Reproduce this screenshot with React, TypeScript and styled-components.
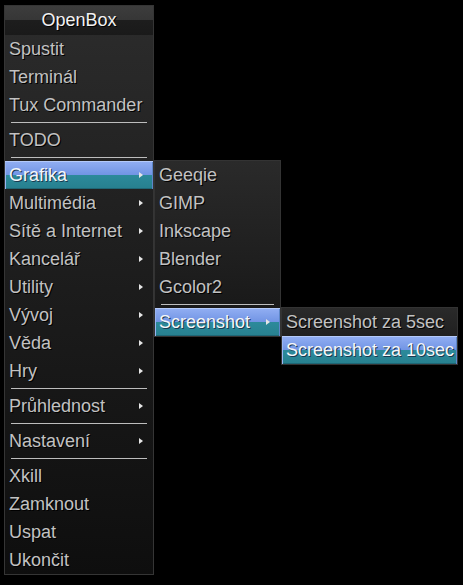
import styled, { createGlobalStyle } from 'styled-components'

const GlobalStyle = createGlobalStyle`
  html, body {
    margin: 0;
    padding: 0;
    background: #000;
  }
  body {
    font-family: "Liberation Sans", Arial, sans-serif;
  }
`

type Entry =
  | { kind: 'item'; label: string; sub?: boolean; active?: boolean }
  | { kind: 'sep' }

const item = (label: string, sub = false, active = false): Entry => ({ kind: 'item', label, sub, active })
const sep: Entry = { kind: 'sep' }

const mainEntries: Entry[] = [
  item('Spustit'),
  item('Terminál'),
  item('Tux Commander'),
  sep,
  item('TODO'),
  sep,
  item('Grafika', true, true),
  item('Multimédia', true),
  item('Sítě a Internet', true),
  item('Kancelář', true),
  item('Utility', true),
  item('Vývoj', true),
  item('Věda', true),
  item('Hry', true),
  sep,
  item('Průhlednost', true),
  sep,
  item('Nastavení', true),
  sep,
  item('Xkill'),
  item('Zamknout'),
  item('Uspat'),
  item('Ukončit'),
]

const grafikaEntries: Entry[] = [
  item('Geeqie'),
  item('GIMP'),
  item('Inkscape'),
  item('Blender'),
  item('Gcolor2'),
  sep,
  item('Screenshot', true, true),
]

const screenshotEntries: Entry[] = [
  item('Screenshot za 5sec'),
  item('Screenshot za 10sec', false, true),
]

const MenuList = ({ entries, child }: { entries: Entry[]; child?: React.ReactNode }) => (
  <>
    {entries.map((e, i) =>
      e.kind === 'sep' ? (
        <Separator key={i} />
      ) : (
        <Item key={i} $active={e.active}>
          {e.label}
          {e.sub && <Arrow />}
          {e.active && child}
        </Item>
      )
    )}
  </>
)

export default function App() {
  return (
    <Desktop>
      <GlobalStyle />
      <Menu $width={150}>
        <Title>OpenBox</Title>
        <MenuBody>
          <MenuList
            entries={mainEntries}
            child={
              <SubMenu $width={127}>
                <MenuList
                  entries={grafikaEntries}
                  child={
                    <SubMenu $width={177}>
                      <MenuList entries={screenshotEntries} />
                    </SubMenu>
                  }
                />
              </SubMenu>
            }
          />
        </MenuBody>
      </Menu>
    </Desktop>
  )
}

const Desktop = styled.div`
  display: flex;
  align-items: flex-start;
  padding: 5px 0 0 4px;
  min-height: 585px;
  box-sizing: border-box;
  background: #000;
`

const Menu = styled.div<{ $width: number }>`
  display: flex;
  flex-direction: column;
  width: ${(p) => p.$width}px;
  box-sizing: border-box;
  border: 1px solid #353535;
  background: linear-gradient(to bottom, #2c2c2c 0%, #1c1c1c 50%, #0e0e0e 100%);
`

const Title = styled.div`
  height: 29px;
  line-height: 29px;
  text-align: center;
  font-size: 18px;
  color: #f2f2f2;
  text-shadow: 1px 1px 0 #000;
  background: linear-gradient(to bottom, #3d3d3d 0%, #363636 50%, #1d1d1d 50%, #1a1a1a 100%);
`

const MenuBody = styled.div`
  display: flex;
  flex-direction: column;
`

const SubMenu = styled.div<{ $width: number }>`
  position: absolute;
  top: -1px;
  left: calc(100% + 1px);
  width: ${(p) => p.$width}px;
  box-sizing: border-box;
  display: flex;
  flex-direction: column;
  border: 1px solid #333;
  background: linear-gradient(to bottom, #2a2a2a 0%, #161616 100%);
  z-index: 1;
`

const Item = styled.div<{ $active?: boolean }>`
  position: relative;
  height: 28px;
  line-height: 28px;
  padding-left: 4px;
  font-size: 18px;
  white-space: nowrap;
  color: ${(p) => (p.$active ? '#f4f6fa' : '#c2c2c2')};
  text-shadow: 1px 1px 0 ${(p) => (p.$active ? '#1a3a50' : '#000')};
  background: ${(p) =>
    p.$active
      ? 'linear-gradient(to bottom, #92aff3 0%, #7194e4 50%, #2c8a9b 50%, #27808f 100%)'
      : 'transparent'};
  box-shadow: ${(p) => (p.$active ? 'inset 0 1px 0 #b4cafa, inset 1px 0 0 #9ab6f2, inset -1px 0 0 #5d86c8, inset 0 -1px 0 #1f6675' : 'none')};
`

const Arrow = styled.span`
  position: absolute;
  right: 10px;
  top: 11px;
  width: 0;
  height: 0;
  border-left: 4px solid #e6e6e6;
  border-top: 3.5px solid transparent;
  border-bottom: 3.5px solid transparent;
`

const Separator = styled.div`
  height: 7px;
  display: flex;
  align-items: center;
  padding: 0 6px;
  &::after {
    content: '';
    flex: 1;
    height: 1px;
    background: #bdbdbd;
  }
`
